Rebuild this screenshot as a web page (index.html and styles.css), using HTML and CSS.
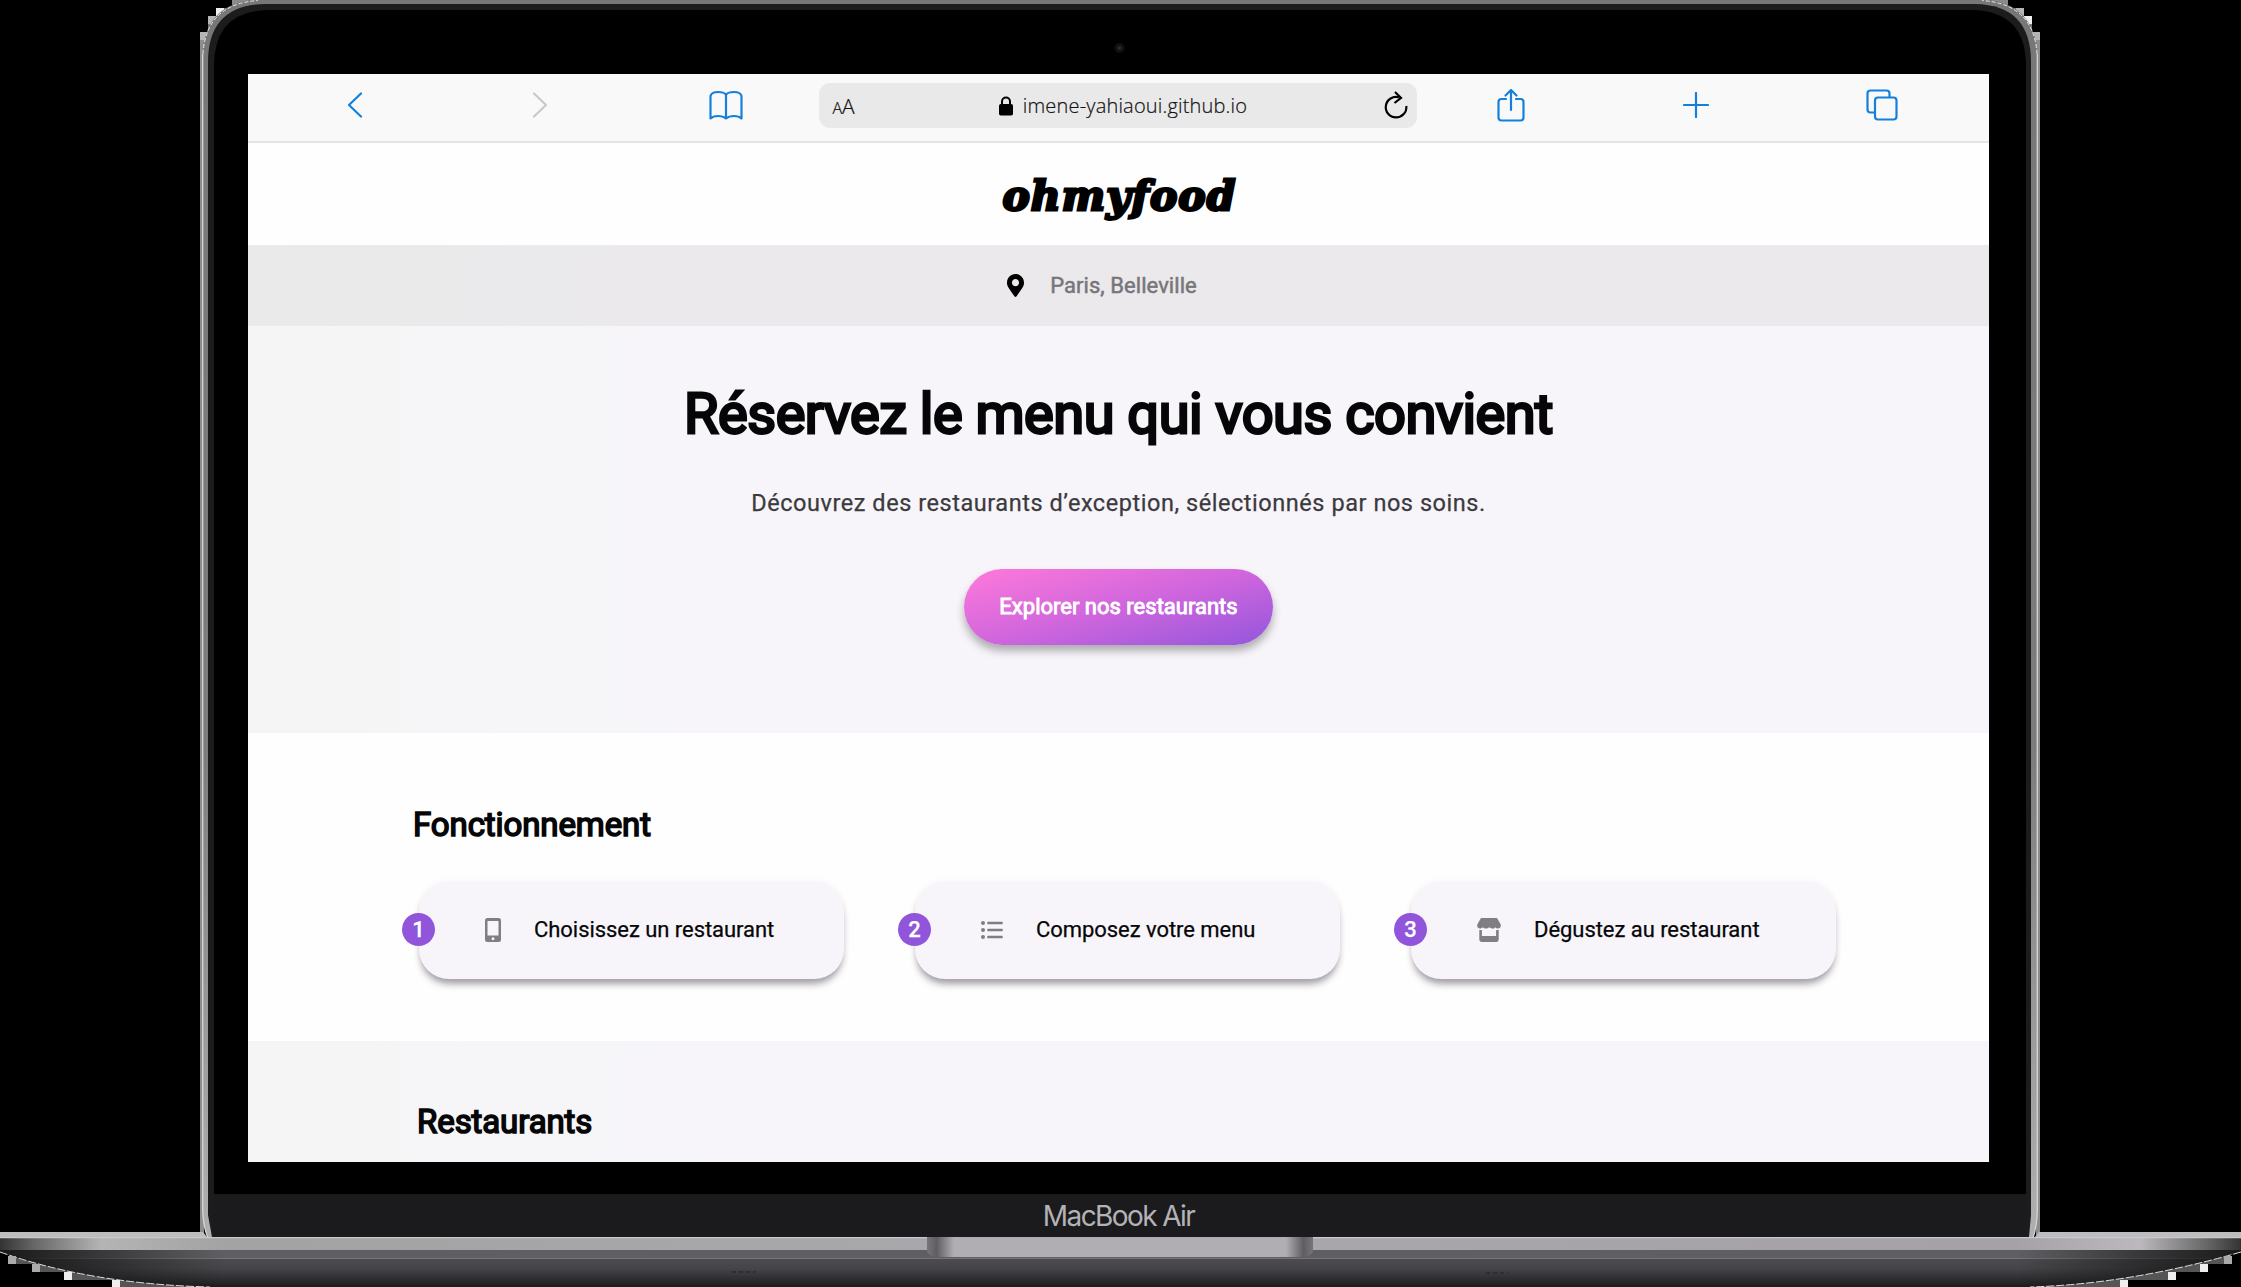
FILE: index.html
```html
<!DOCTYPE html>
<html lang="fr">
<head>
<meta charset="utf-8">
<title>ohmyfood</title>
<link rel="stylesheet" href="styles.css">
</head>
<body>
<div class="laptop">
  <svg class="frame" viewBox="0 0 2241 1287" aria-hidden="true">
    <defs>
      <linearGradient id="edge" x1="0" y1="0" x2="0" y2="1">
        <stop offset="0" stop-color="#777"/><stop offset=".6" stop-color="#7c7c7d"/><stop offset="1" stop-color="#b0afb1"/>
      </linearGradient>
      <linearGradient id="deck" x1="0" y1="0" x2="1" y2="0">
        <stop offset="0" stop-color="#333"/><stop offset=".015" stop-color="#666"/><stop offset=".045" stop-color="#b4b4b4"/><stop offset=".1" stop-color="#a3a3a3"/>
        <stop offset=".5" stop-color="#aaa8ad"/><stop offset=".9" stop-color="#a5a1a6"/><stop offset=".955" stop-color="#bcb8bd"/><stop offset=".985" stop-color="#666"/><stop offset="1" stop-color="#333"/>
      </linearGradient>
      <linearGradient id="belly" x1="0" y1="0" x2="0" y2="1">
        <stop offset="0" stop-color="#525155"/><stop offset=".5" stop-color="#454448"/><stop offset="1" stop-color="#1d1b1e"/>
      </linearGradient>
      <linearGradient id="shade" x1="0" y1="0" x2="1" y2="0">
        <stop offset="0" stop-color="#111" stop-opacity=".9"/><stop offset=".1" stop-color="#111" stop-opacity="0"/>
        <stop offset=".9" stop-color="#111" stop-opacity="0"/><stop offset="1" stop-color="#111" stop-opacity=".9"/>
      </linearGradient>
      <linearGradient id="notch" x1="0" y1="0" x2="1" y2="0">
        <stop offset="0" stop-color="#77757a"/><stop offset=".025" stop-color="#5f5d62"/><stop offset=".07" stop-color="#b0aeb3"/>
        <stop offset=".93" stop-color="#b0aeb3"/><stop offset=".975" stop-color="#5f5d62"/><stop offset="1" stop-color="#77757a"/>
      </linearGradient>
    </defs>
    <!-- stepped highlights round the lid corners -->
    <path fill="#777" d="M200 32h8v-8h8v-8h8V8h8V0h40v60h-72zM2040 32h-8v-8h-8v-8h-8V8h-8V0h-40v60h72z"/>
    <path fill="#b5b5b5" d="M200 32h8v8h-8zM208 16h8v8h-8zM2032 32h8v8h-8zM2016 8h8v8h-8z"/>
    <path fill="#eee" d="M216 8h8v8h-8zM2024 16h8v8h-8z"/>
    <path fill="#8a8a8a" d="M232 0h16v8h-16zM1992 0h16v8h-16z"/>
    <path fill="#8d8d8e" d="M200 40h4v1195h-4zM2036 40h4v1195h-4z"/>
    <!-- lid -->
    <path fill="url(#edge)" d="M202.500 60Q202.500 0 262.500 -.500H1977.500Q2037.500 0 2037.500 60V1210Q2037 1226 2033 1238H208Q203 1226 202.500 1210z"/>
    <path fill="none" stroke="#e8e8e8" stroke-dasharray="4 2" d="M203 54Q206 4 258 .500M2037 54Q2034 4 1982 .500"/>
    <path fill="none" stroke="#d6d6d6" stroke-width="1.300" d="M202.700 54V1210Q203 1226 208 1238M2037.300 54V1210Q2037 1226 2033 1238"/>
    <path fill="#1c1c1c" d="M208 62Q208 5 265 4H1975Q2031 5 2031 62V1215L2029 1237H212L208 1215z"/>
    <path fill="#000" d="M214 66Q214 11 268 10H1972Q2026 11 2026 66V1237H214z"/>
    <path fill="#1b1a1d" d="M214 1194H2026V1237H214z"/>
    <circle cx="1119.500" cy="48" r="5" fill="#111"/><circle cx="1119.500" cy="48" r="2" fill="#2c2c30"/>
    <!-- base -->
    <path fill="#bdbcbe" d="M0 1232H203l5 6H0zM2241 1232H2039l-5 6H2241z"/>
    <path fill="#555" d="M8 1256h60v31H112v-7H64v-8H32v-8H8zM40 1264h60v8h60v8h60v7H120v-7H72v-8H40zM2233 1256h-60v8h-60v8h-60v8h-60v7h129v-7h48v-8h32v-8h24z"/>
    <path fill="#000" d="M0 1252V1287H112v-7H64v-8H32v-8H8v-8zM2241 1252V1287H2128v-7H2176v-8H2208v-8H2232v-8z"/>
    <path fill="url(#belly)" d="M0 1250H2241V1252Q2130 1284 2030 1287H210Q90 1284 0 1252z"/>
    <path fill="#5f5e62" d="M0 1250H2241V1252L2218 1258H22L0 1252z"/>
    <path fill="#757478" d="M30 1258H2211V1259H30z"/>
    <path fill="url(#shade)" d="M0 1250H2241V1252Q2130 1284 2030 1287H210Q90 1284 0 1252z"/>
    <path fill="none" stroke="#ddd" stroke-dasharray="8 2" d="M0 1252Q90 1284 210 1287M2241 1252Q2130 1284 2030 1287"/>
    <path fill="#aaa" d="M8 1256h8v8H8zM32 1264h8v8h-8zM2224 1256h8v8h-8z"/>
    <path fill="#eee" d="M64 1272h8v8h-8zM112 1280h8v7h-8zM2200 1264h8v8h-8zM2168 1272h8v8h-8zM2120 1280h8v7h-8z"/>
    <path fill="url(#deck)" d="M0 1237H2241V1250H0z"/>
    <path fill="#c9c8cb" d="M0 1237H2241V1238.300H0z"/>
    <path fill="url(#notch)" d="M927 1237H1313V1250Q1312 1257 1303 1257H937Q928 1257 927 1250z"/>
    <path stroke="#2b2a2d" stroke-width="1.500" stroke-dasharray="4 3" d="M732 1272h24M1486 1273h22"/>
  </svg>

  <main class="screen">
    <div class="toolbar">
      <svg class="ico" width="16" height="26" viewBox="0 0 16 26"><path d="M14 1.500L2 13l12 11.500"/></svg>
      <svg class="ico off" width="16" height="26" viewBox="0 0 16 26"><path d="M2 1.500L14 13 2 24.500"/></svg>
      <svg class="ico" width="34" height="30" viewBox="0 0 34 30"><path d="M17 5Q15.500 2 9 2T1.500 6V28.500Q4 26 9 26T17 28.500Q20 26 25 26T32.500 28.500V6Q31.500 2 25 2T17 5V28"/></svg>
      <div class="address">
        <span class="aa"><small>A</small>A</span>
        <span class="url">
          <svg width="14" height="20" viewBox="0 0 14 20"><rect y="8" width="14" height="11.500" rx="1.800"/><path d="M3 9V5.500a4 4 0 0 1 8 0V9" fill="none" stroke="#000" stroke-width="2"/></svg>
          <span>imene-yahiaoui.github.io</span>
        </span>
        <svg class="reload" width="24" height="28" viewBox="0 0 24 28"><path d="M15 6.300A10.300 10.300 0 1 0 22.300 15"/><path d="M11 1l6 5.800-6.500 5.200"/></svg>
      </div>
      <svg class="ico" width="28" height="34" viewBox="0 0 28 34"><path d="M9 11H4.500Q1.500 11 1.500 14V29.500Q1.500 32.500 4.500 32.500H23.500Q26.500 32.500 26.500 29.500V14Q26.500 11 23.500 11H19M14 22V2M8.500 7.500L14 2l5.500 5.500"/></svg>
      <svg class="ico" width="26" height="26" viewBox="0 0 26 26"><path d="M13 1V25M1 13H25"/></svg>
      <svg class="ico" width="32" height="32" viewBox="0 0 32 32"><path d="M9 23.500H4.500Q1.500 23.500 1.500 20.500V4.500Q1.500 1.500 4.500 1.500H20.500Q23.500 1.500 23.500 4.500V8.500M12 8.500H27.500Q30.500 8.500 30.500 11.500V27.500Q30.500 30.500 27.500 30.500H12Q9 30.500 9 27.500V11.500Q9 8.500 12 8.500z"/></svg>
    </div>

    <header class="header"><div class="logo">ohmyfood</div></header>

    <div class="location">
      <svg width="17" height="23" viewBox="0 0 384 512" preserveAspectRatio="none"><path d="M172.300 501.700C27 291 0 269.400 0 192 0 86 86 0 192 0s192 86 192 192c0 77.400-27 99-172.300 309.700-9.500 13.800-29.900 13.800-39.400 0zM192 272c44.200 0 80-35.800 80-80s-35.800-80-80-80-80 35.800-80 80 35.800 80 80 80z"/></svg>
      <span>Paris, Belleville</span>
    </div>

    <section class="hero">
      <h1>Réservez le menu qui vous convient</h1>
      <p>Découvrez des restaurants d’exception, sélectionnés par nos soins.</p>
      <a class="button">Explorer nos restaurants</a>
    </section>

    <section class="how">
      <h2>Fonctionnement</h2>
      <div class="steps">
        <div class="step"><b>1</b>
          <svg width="16" height="24" viewBox="0 0 16 24"><path fill-rule="evenodd" d="M2.500 0h11A2.500 2.500 0 0 1 16 2.500v19a2.500 2.500 0 0 1-2.500 2.500h-11A2.500 2.500 0 0 1 0 21.500v-19A2.500 2.500 0 0 1 2.500 0zM2.500 3v14.500h11V3zM8 19.300a1.500 1.500 0 1 0 .01 0z"/></svg>
          <span>Choisissez un restaurant</span></div>
        <div class="step"><b>2</b>
          <svg width="22" height="20" viewBox="0 0 22 20"><path d="M7 1.700h14a.8.800 0 0 1 .8.800v1a.8.800 0 0 1-.8.800H7a.8.800 0 0 1-.8-.8v-1A.8.800 0 0 1 7 1.700zM7 8.700h14a.8.800 0 0 1 .8.800v1a.8.800 0 0 1-.8.800H7a.8.800 0 0 1-.8-.8v-1A.8.800 0 0 1 7 8.700zM7 15.700h14a.8.800 0 0 1 .8.800v1a.8.800 0 0 1-.8.800H7a.8.800 0 0 1-.8-.8v-1a.8.800 0 0 1 .8-.8z"/><circle cx="2" cy="3" r="2"/><circle cx="2" cy="10" r="2"/><circle cx="2" cy="17" r="2"/></svg>
          <span>Composez votre menu</span></div>
        <div class="step"><b>3</b>
          <svg width="24" height="24" viewBox="0 0 24 24"><path d="M4 0h16l3.500 6q1.300 3.500-2 4.500-2 .4-3.200-1.200Q17 11 15.200 10.600T12 9.200Q10.800 10.800 8.900 10.600T5.700 9.200Q4.500 10.900 2.500 10.500-.8 9.500.5 6z"/><path d="M2.300 12h2.600V18h14.200v-6h2.600V21q0 3-2.500 3H4.800q-2.500 0-2.500-3z"/></svg>
          <span>Dégustez au restaurant</span></div>
      </div>
    </section>

    <section class="restaurants"><h2>Restaurants</h2></section>
  </main>

  <div class="chin">MacBook Air</div>
</div>
</body>
</html>
```
FILE: styles.css
```css
* { box-sizing: border-box; margin: 0; }
body { background: #000; font-family: Roboto, sans-serif; color: #060608; }
.laptop { position: relative; width: 2241px; height: 1287px; padding: 74px 252px 0 248px; overflow: hidden; }
.frame { position: absolute; inset: 0; width: 2241px; height: 1287px; }
.screen { position: relative; display: flex; flex-direction: column; height: 1088px; background: #fefefe; overflow: hidden; }

.toolbar { display: grid; grid-template-columns: repeat(3, 185.5px) 598px repeat(3, 185.5px); align-items: center; justify-items: center; height: 69px; padding: 0 14px 5px 14px; background: #f9f9fa; border-bottom: 2px solid #e4e4e7; }
.ico { fill: none; stroke: #1580dc; stroke-width: 2.2; stroke-linecap: round; stroke-linejoin: round; }
.off { stroke: #c9c9cc; }
.address { justify-self: stretch; display: grid; grid-template-columns: 60px 1fr 60px; align-items: center; height: 45px; padding: 0 9px 0 14px; border-radius: 11px; background: #e9e9ea; font-family: "Open Sans", sans-serif; font-weight: 300; font-size: 20px; color: #111; -webkit-text-stroke: .2px #111; }
.address svg { -webkit-text-stroke: 0; }
.address ~ .ico { position: relative; left: 1.5px; }
.aa { font-size: 21px; line-height: 30px; padding-top: 3px; }
.aa small { font-size: 16px; }
.url { display: flex; align-items: center; justify-content: center; gap: 10px; line-height: 28px; padding: 2px 0 0 6px; }
.url span { letter-spacing: .18px; }
.reload { justify-self: end; fill: none; stroke: #000; stroke-width: 2.2; }

.header { display: flex; align-items: center; justify-content: center; height: 102px; padding: 3px 0 0 2px; }
.logo { font: italic bold 41px/50px "DejaVu Serif", serif; letter-spacing: 1.1px; color: #000; -webkit-text-stroke: 2.8px #000; }
.location { display: flex; align-items: center; justify-content: center; gap: 26px; height: 81px; padding: 0 33px 1px 0; background: linear-gradient(90deg, #eaeaea, #ebe9ec 25%); font-size: 22px; letter-spacing: .06px; color: #77767a; -webkit-text-stroke: .5px #77767a; }
.location svg { -webkit-text-stroke: 0; }

.hero { display: flex; flex-direction: column; align-items: center; height: 407px; padding-top: 55px; background: linear-gradient(90deg, #f5f5f5, #f7f5fa 30%); }
h1 { font-size: 56px; line-height: 66px; font-weight: 400; letter-spacing: -.52px; white-space: nowrap; -webkit-text-stroke: 2.8px currentColor; }
.hero p { margin-top: 41px; font-size: 23.5px; line-height: 30px; letter-spacing: .55px; color: #3b3a3e; -webkit-text-stroke: .25px #3b3a3e; }
.button { margin-top: 51px; width: 309px; height: 76px; border-radius: 38px; background: linear-gradient(165deg, #ff79da, #d066dd 50%, #9356dc); box-shadow: 0 6px 8px rgba(0, 0, 0, .3); font-size: 22px; line-height: 75px; font-weight: 400; text-align: center; color: #fff; -webkit-text-stroke: .9px #fff; }

h2 { font-size: 33px; line-height: 40px; font-weight: 400; letter-spacing: -.1px; -webkit-text-stroke: 1.6px currentColor; }
.how { height: 308px; padding: 72px 0 0 165px; }
.steps { display: grid; grid-template-columns: repeat(3, 425px); gap: 71px; margin: 36px 0 0 6px; }
.step { position: relative; display: flex; align-items: center; gap: 33px; height: 98px; padding: 0 0 1px 66px; border-radius: 30px; background: #f7f5f9; box-shadow: 0 7px 7px -2px rgba(40, 30, 45, .42), 0 0 8px rgba(60, 50, 80, .04); font-size: 22px; letter-spacing: -.05px; -webkit-text-stroke: .25px currentColor; }
.step b { position: absolute; left: -17px; top: 32px; width: 33px; height: 33px; border-radius: 50%; background: #9055da; color: #fff; line-height: 33px; text-align: center; font-weight: 500; }
.step svg { fill: #7f7e82; -webkit-text-stroke: 0; }
.restaurants { flex: 1; padding: 61px 0 0 169px; background: linear-gradient(90deg, #f5f5f5, #f7f5fa 30%); }

.chin { position: relative; height: 75px; padding: 37px 0 0 0; font: 28px/34px Inter, sans-serif; text-align: center; color: #b3b2b6; letter-spacing: -1.6px; }
```
